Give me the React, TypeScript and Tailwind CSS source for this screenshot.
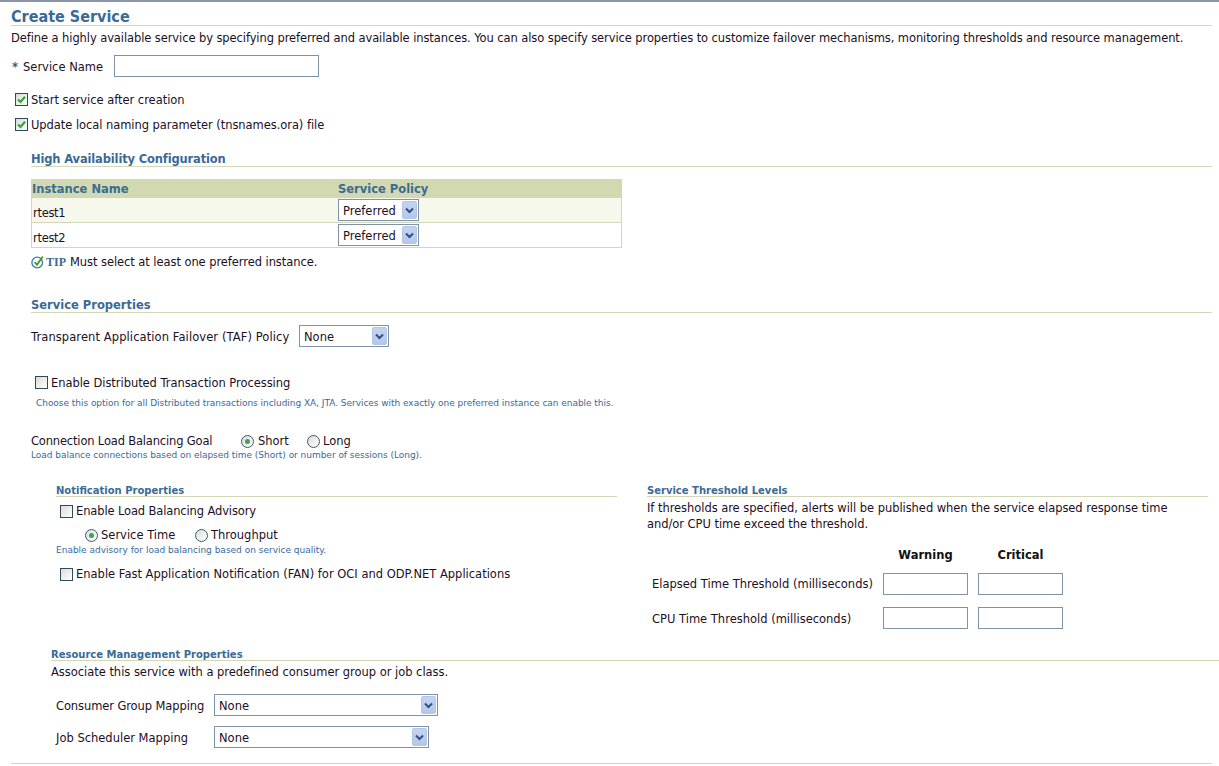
import type { ReactNode } from 'react';

const FONT = "font-['DejaVu_Sans',sans-serif] text-[11.5px] leading-[14px] text-[#1c0f24]";

function Check({ checked }: { checked?: boolean }) {
  return (
    <span className="flex h-[13px] w-[13px] shrink-0 items-center justify-center border border-[#2f4a5f] bg-gradient-to-br from-[#dcdcd6] to-white">
      {checked && (
        <svg width="11" height="11" viewBox="0 0 11 11">
          <path d="M2 5.5 L4.5 8 L9 2.8" fill="none" stroke="#2fa53a" strokeWidth="2.2" />
        </svg>
      )}
    </span>
  );
}

function Radio({ checked }: { checked?: boolean }) {
  return (
    <span className="flex h-[13px] w-[13px] shrink-0 items-center justify-center rounded-full border border-[#3d5a70] bg-gradient-to-br from-[#dcdcd6] to-white">
      {checked && <span className="h-[5px] w-[5px] rounded-full bg-[#3aa64a]" />}
    </span>
  );
}

function Select({ value, width }: { value: string; width: string }) {
  return (
    <div className={`flex h-[22px] items-center justify-between border border-[#7f93a8] bg-white pl-[4px] pr-[1px] ${width}`}>
      <span className="pt-[1px]">{value}</span>
      <span className="flex h-[18px] w-[15px] items-center justify-center rounded-[2px] border border-[#b4c6e4] bg-gradient-to-b from-[#c3d3f2] to-[#b5c8ec]">
        <svg width="9" height="7" viewBox="0 0 9 7">
          <path d="M1 1.5 L4.5 5 L8 1.5" fill="none" stroke="#33507c" strokeWidth="2" />
        </svg>
      </span>
    </div>
  );
}

function TextBox({ width }: { width: string }) {
  return <input className={`h-[22px] border border-[#7f93a8] bg-white ${width}`} />;
}

function Heading({ children, className }: { children: ReactNode; className: string }) {
  return (
    <div className={`border-b border-[#d4d6b8] font-bold text-[#3a6a96] ${className}`}>{children}</div>
  );
}

function Help({ children, className }: { children: ReactNode; className: string }) {
  return <div className={`text-[9px] leading-[12px] text-[#39699a] ${className}`}>{children}</div>;
}

export default function App() {
  return (
    <div className={`h-[766px] w-[1219px] overflow-hidden whitespace-nowrap border-t-2 border-[#8a96a8] bg-white ${FONT}`}>
      <div className="ml-[11px] mr-[7px] mt-[4px] h-[20px] border-b border-[#d4d6b8] pt-[2px] font-['DejaVu_Sans_Condensed','Open_Sans',sans-serif] text-[16px] font-bold leading-[17px] text-[#3a6a96]">
        Create Service
      </div>
      <div className="ml-[11px] mt-[5px] tracking-[-0.09px]">
        Define a highly available service by specifying preferred and available instances. You can also specify service properties to customize failover mechanisms, monitoring thresholds and resource management.
      </div>

      <div className="ml-[12px] mt-[10px] flex h-[22px] items-center">
        <span className="w-[11px] pt-[1px] font-bold text-[#2f5f8a]">*</span>
        <span className="w-[91px] pt-[1px]">Service Name</span>
        <TextBox width="w-[205px]" />
      </div>

      <div className="ml-[15px] mt-[15px] flex items-center gap-[3px]">
        <Check checked />
        <span className="pt-[1px] tracking-[-0.03px]">Start service after creation</span>
      </div>
      <div className="ml-[15px] mt-[10px] flex items-center gap-[3px]">
        <Check checked />
        <span className="pt-[1px] tracking-[-0.06px]">Update local naming parameter (tnsnames.ora) file</span>
      </div>

      <Heading className="ml-[31px] mr-[7px] mt-[19px] h-[16px] pt-[1px] tracking-[-0.15px]">High Availability Configuration</Heading>

      <div className="ml-[31px] mt-[12px] w-[591px]">
        <div className="flex h-[19px] items-center bg-[#d2d9b1] font-bold text-[#3a6a96]">
          <span className="w-[307px] pl-[1px]">Instance Name</span>
          <span>Service Policy</span>
        </div>
        <div className="flex h-[25px] items-center border-x border-b border-[#d4d6b8] bg-[#f7f8ec]">
          <span className="w-[306px] pl-[1px] pt-[5px] tracking-[-0.3px]">rtest1</span>
          <Select value="Preferred" width="w-[81px]" />
        </div>
        <div className="flex h-[25px] items-center border-x border-b border-[#d4d6b8]">
          <span className="w-[306px] pl-[1px] pt-[5px] tracking-[-0.3px]">rtest2</span>
          <Select value="Preferred" width="w-[81px]" />
        </div>
      </div>

      <div className="ml-[31px] mt-[7px] flex items-center gap-[2px]">
        <svg width="13" height="14" viewBox="0 0 13 14">
          <circle cx="6.2" cy="7.5" r="5.3" fill="none" stroke="#3a7ab0" strokeWidth="1.3" />
          <path d="M3.6 7 L6 9.8 L11.8 1.5" fill="none" stroke="#3f9a24" strokeWidth="1.8" />
        </svg>
        <span className="font-['Liberation_Serif',serif] text-[12px] font-bold text-[#3a6a96]">TIP</span>
        <span className="ml-[2px] tracking-[-0.07px]">Must select at least one preferred instance.</span>
      </div>

      <Heading className="ml-[31px] mr-[7px] mt-[28px] h-[16px] pt-[1px]">Service Properties</Heading>

      <div className="ml-[31px] mt-[12px] flex items-center">
        <span className="w-[268px] pt-[1px] tracking-[0.09px]">Transparent Application Failover (TAF) Policy</span>
        <Select value="None" width="w-[90px]" />
      </div>

      <div className="ml-[35px] mt-[28px] flex items-center gap-[3px]">
        <Check />
        <span className="pt-[1px] tracking-[-0.05px]">Enable Distributed Transaction Processing</span>
      </div>
      <Help className="ml-[36px] mt-[7px] tracking-[-0.04px]">
        Choose this option for all Distributed transactions including XA, JTA. Services with exactly one preferred instance can enable this.
      </Help>

      <div className="ml-[31px] mt-[25px] flex items-center">
        <span className="w-[210px] tracking-[-0.17px]">Connection Load Balancing Goal</span>
        <Radio checked />
        <span className="ml-[4px] w-[49px]">Short</span>
        <Radio />
        <span className="ml-[3px]">Long</span>
      </div>
      <Help className="ml-[31px] mt-[1px] tracking-[-0.03px]">
        Load balance connections based on elapsed time (Short) or number of sessions (Long).
      </Help>

      <div className="mt-[23px] flex">
        <div className="ml-[56px] w-[561px]">
          <Heading className="h-[13px] text-[10px] leading-[13px]">Notification Properties</Heading>
          <div className="ml-[4px] mt-[7px] flex items-center gap-[3px]">
            <Check />
            <span className="tracking-[-0.13px]">Enable Load Balancing Advisory</span>
          </div>
          <div className="ml-[29px] mt-[10px] flex items-center">
            <Radio checked />
            <span className="ml-[3px] w-[94px]">Service Time</span>
            <Radio />
            <span className="ml-[3px]">Throughput</span>
          </div>
          <Help className="mt-[2px]">Enable advisory for load balancing based on service quality.</Help>
          <div className="ml-[4px] mt-[11px] flex items-center gap-[3px]">
            <Check />
            <span>Enable Fast Application Notification (FAN) for OCI and ODP.NET Applications</span>
          </div>
        </div>

        <div className="ml-[30px] w-[561px]">
          <Heading className="h-[13px] text-[10px] leading-[13px]">Service Threshold Levels</Heading>
          <div className="mt-[3px] leading-[16px] tracking-[-0.05px]">
            If thresholds are specified, alerts will be published when the service elapsed response time
            <br />
            and/or CPU time exceed the threshold.
          </div>
          <div className="mt-[16px] flex font-bold text-[#111]">
            <span className="ml-[236px] w-[85px] text-center">Warning</span>
            <span className="ml-[10px] w-[85px] text-center">Critical</span>
          </div>
          <div className="mt-[11px] flex items-center">
            <span className="ml-[5px] w-[231px]">Elapsed Time Threshold (milliseconds)</span>
            <TextBox width="w-[85px]" />
            <TextBox width="ml-[10px] w-[85px]" />
          </div>
          <div className="mt-[12px] flex items-center">
            <span className="ml-[5px] w-[231px] pt-[1px]">CPU Time Threshold (milliseconds)</span>
            <TextBox width="w-[85px]" />
            <TextBox width="ml-[10px] w-[85px]" />
          </div>
        </div>
      </div>

      <Heading className="ml-[51px] mt-[18px] h-[14px] pt-[1px] text-[10px] leading-[13px]">Resource Management Properties</Heading>
      <div className="ml-[51px] mt-[4px] tracking-[-0.03px]">Associate this service with a predefined consumer group or job class.</div>
      <div className="ml-[56px] mt-[15px] flex items-center">
        <span className="w-[158px] pt-[1px] tracking-[-0.1px]">Consumer Group Mapping</span>
        <Select value="None" width="w-[224px]" />
      </div>
      <div className="ml-[56px] mt-[10px] flex items-center">
        <span className="w-[158px] pt-[1px]">Job Scheduler Mapping</span>
        <Select value="None" width="w-[215px]" />
      </div>
      <div className="ml-[11px] mr-[7px] mt-[15px] border-b border-[#d4d6b8]" />
    </div>
  );
}
